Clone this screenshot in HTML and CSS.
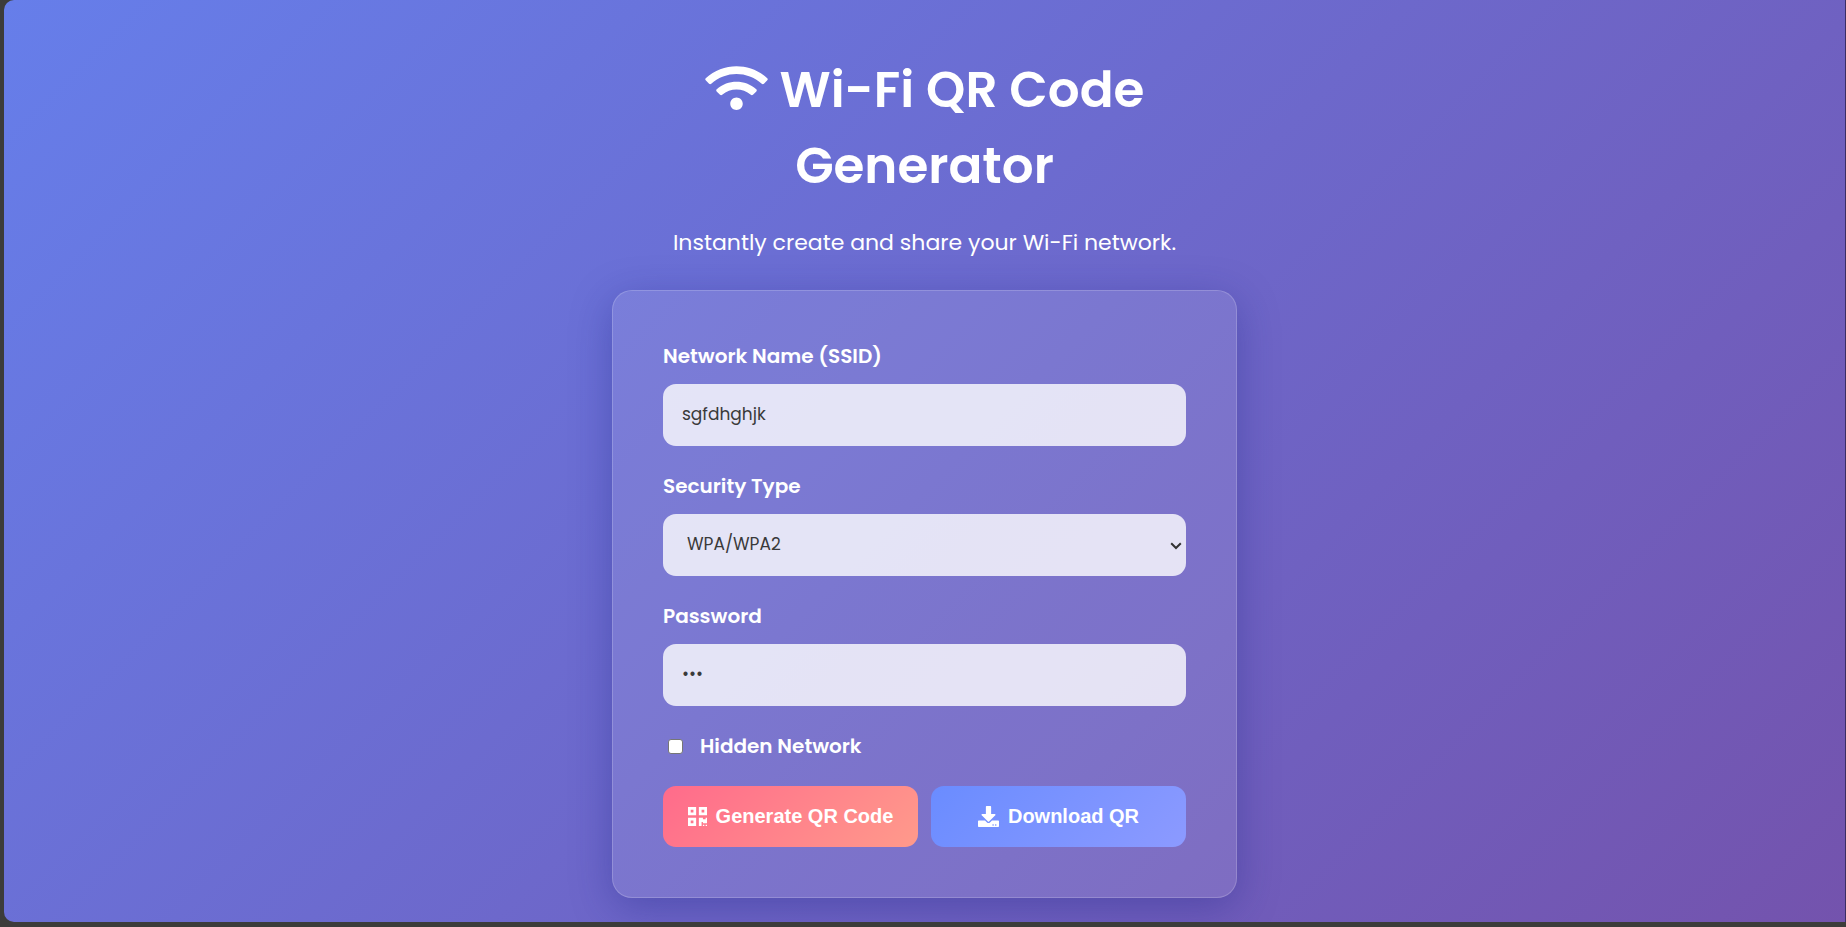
FILE: index.html
```html
<!DOCTYPE html>
<html lang="en">
<head>
<meta charset="utf-8">
<title>Wi-Fi QR Code Generator</title>
<link rel="stylesheet" href="styles.css">
</head>
<body>
<div class="page">
  <main class="container">
    <header class="header">
      <h1 class="title"><svg class="wifi-icon" viewBox="0 0 640 512" aria-hidden="true"><path d="M634.91 154.88C457.74-8.99 182.19-8.93 5.090 154.88c-6.66 6.16-6.79 16.59-.35 22.98l34.24 33.97c6.14 6.1 16.02 6.23 22.4.38 145.92-133.68 371.3-133.71 517.25 0 6.38 5.85 16.26 5.71 22.4-.38l34.24-33.97c6.43-6.39 6.3-16.82-.36-22.98zM320 352c-35.350 0-64 28.650-64 64s28.650 64 64 64 64-28.650 64-64-28.650-64-64-64zm202.67-83.59c-115.26-101.93-290.21-101.82-405.34 0-6.9 6.1-7.12 16.69-.57 23.15l34.44 33.99c6 5.92 15.66 6.32 22.05.8 83.95-72.57 209.74-72.41 293.49 0 6.39 5.52 16.05 5.13 22.05-.8l34.44-33.99c6.56-6.46 6.33-17.06-.56-23.15z"/></svg> Wi-Fi QR Code Generator</h1>
      <p class="subtitle">Instantly create and share your Wi-Fi network.</p>
    </header>
    <form class="card">
      <div class="field">
        <label for="ssid">Network Name (SSID)</label>
        <input class="control" id="ssid" type="text" value="sgfdhghjk">
      </div>
      <div class="field">
        <label for="security">Security Type</label>
        <div class="select-wrap">
          <select class="control" id="security">
            <option>WPA/WPA2</option>
            <option>WEP</option>
            <option>None</option>
          </select>
          <svg class="chevron" viewBox="0 0 12 8" aria-hidden="true"><path d="M1.200 1.200L6 6l4.800-4.800"/></svg>
        </div>
      </div>
      <div class="field">
        <label for="password">Password</label>
        <input class="control" id="password" type="password" value="abc">
      </div>
      <div class="check-row">
        <input class="check" id="hidden" type="checkbox">
        <label for="hidden">Hidden Network</label>
      </div>
      <div class="actions">
        <button class="btn btn-generate" type="button"><svg class="qr-icon" viewBox="0 32 448 448" aria-hidden="true"><path d="M0 224h192V32H0v192zM64 96h64v64H64V96zm192-64v192h192V32H256zm128 128h-64V96h64v64zM0 480h192V288H0v192zm64-128h64v64H64v-64zm352-64h32v128h-96v-32h-32v96h-64V288h96v32h64v-32zm0 160h32v32h-32v-32zm-64 0h32v32h-32v-32z"/></svg>Generate QR Code</button>
        <button class="btn btn-download" type="button"><svg class="dl-icon" viewBox="0 0 512 512" aria-hidden="true"><path fill-rule="evenodd" d="M216 0h80c13.3 0 24 10.7 24 24v168h87.7c17.8 0 26.7 21.5 14.1 34.1L269.7 378.3c-7.5 7.5-19.8 7.5-27.3 0L90.1 226.1C77.5 213.5 86.4 192 104.2 192H192V24c0-13.3 10.7-24 24-24zM512 376v112c0 13.3-10.7 24-24 24H24c-13.3 0-24-10.7-24-24V376c0-13.3 10.7-24 24-24h146.7l49 49c20.1 20.1 52.5 20.1 72.600 0l49-49H488c13.3 0 24 10.7 24 24zM388 464a20 20 0 1 0-40 0a20 20 0 1 0 40 0zM452 464a20 20 0 1 0-40 0a20 20 0 1 0 40 0z"/></svg>Download QR</button>
      </div>
    </form>
  </main>
</div>
</body>
</html>
```
FILE: styles.css
```css
* {
  box-sizing: border-box;
}

body {
  margin: 0;
  height: 100vh;
  padding: 0 1px 5px 4px;
  background: linear-gradient(to right, #3c3c3a 0 50%, #3b2d63 99.9%) 0 0 / 100% calc(100% - 5px) no-repeat, #3c3c3a;
  font-family: Poppins, Inter, "Noto Sans", sans-serif;
  color: #fff;
}

.page {
  min-height: 100%;
  overflow: hidden;
  border-radius: 10px 0 0 10px;
  background: linear-gradient(135deg, #667eea, #764ba2) 0 0 / 100% 155%;
}

.container {
  width: 100%;
  max-width: 625px;
  margin: 0 auto;
  padding: 52px 0 24px;
}

.header {
  padding: 0 50px;
  margin-bottom: 30px;
  text-align: center;
}

.title {
  margin: 0 0 22px;
  font-size: 50px;
  font-weight: 600;
  line-height: 76px;
}

.wifi-icon {
  width: 63px;
  height: 50px;
  fill: currentColor;
  vertical-align: -6px;
}

.subtitle {
  margin: 0;
  font-size: 22px;
  line-height: 34px;
  white-space: nowrap;
}

.card {
  padding: 50px;
  border: 1px solid rgba(255, 255, 255, 0.18);
  border-radius: 20px;
  background: rgba(255, 255, 255, 0.1);
  box-shadow: 0 10px 40px rgba(31, 38, 135, 0.37);
}

.field {
  display: flex;
  flex-direction: column;
  gap: 13px;
  margin-bottom: 25px;
}

label {
  font-size: 20px;
  font-weight: 600;
  line-height: 30px;
}

.control {
  display: block;
  width: 100%;
  height: 62px;
  padding: 0 19px 2px;
  border: 0;
  border-radius: 13px;
  background: rgba(255, 255, 255, 0.8);
  color: #3a3a3a;
  font-family: inherit;
  font-size: 17px;
}

.select-wrap {
  position: relative;
}

select.control {
  appearance: none;
  padding: 0 24px 2px;
}

.chevron {
  position: absolute;
  right: 4px;
  top: 28px;
  width: 12px;
  height: 8px;
  fill: none;
  stroke: #333;
  stroke-width: 2;
  pointer-events: none;
}

.check-row {
  display: flex;
  align-items: center;
  gap: 17px;
  margin-bottom: 25px;
}

.check {
  appearance: none;
  width: 15px;
  height: 15px;
  margin: 0 0 0 5px;
  border: 1px solid #767676;
  border-radius: 3px;
  background: #fff;
}

.check:checked {
  background: #6a8cff;
}

.actions {
  display: grid;
  grid-template-columns: 1fr 1fr;
  gap: 13px;
}

.btn {
  display: flex;
  align-items: center;
  justify-content: center;
  gap: 9px;
  height: 61px;
  padding: 0;
  border: 0;
  border-radius: 13px;
  color: #fff;
  font: bold 20px "Liberation Sans", Arial, sans-serif;
}

.btn-generate {
  background: linear-gradient(135deg, #ff6b8b, #ff9a8b);
}

.btn-download {
  background: linear-gradient(135deg, #6a8cff, #8c9aff);
}

.qr-icon {
  width: 19px;
  height: 19px;
  fill: currentColor;
}

.dl-icon {
  width: 21px;
  height: 21px;
  fill: currentColor;
}
```
